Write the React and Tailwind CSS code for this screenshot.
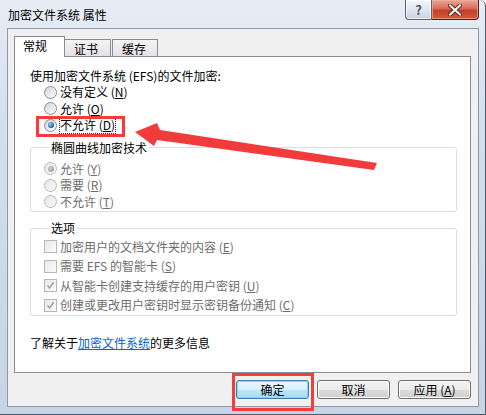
import React from "react";

const font = "font-['Noto_Sans_CJK_SC','Liberation_Sans',sans-serif]";

function Radio({ checked, disabled, focus, children }) {
  return (
    <div className="flex h-[16.5px] items-center">
      <span
        className={`flex h-[13px] w-[13px] items-center justify-center rounded-full border ${
          disabled
            ? "border-[#b8b8b8] bg-[linear-gradient(135deg,#e6e6e6,#fafafa)]"
            : "border-[#8a8c8f] bg-[linear-gradient(135deg,#d4d4d4,#ffffff)]"
        }`}
      >
        {checked && (
          <span
            className={`h-[6px] w-[6px] rounded-full ${
              disabled
                ? "bg-[radial-gradient(circle_at_35%_35%,#d0d0d0,#8c8c8c)]"
                : "bg-[radial-gradient(circle_at_35%_35%,#8fd0ff,#1a5fa8_70%)]"
            }`}
          />
        )}
      </span>
      <span
        className={`ml-[3px] leading-[16px] ${disabled ? "text-[#6d6d6d]" : "text-black"} ${
          focus ? "outline outline-1 outline-dotted outline-[#333]" : ""
        }`}
      >
        {children}
      </span>
    </div>
  );
}

function Check({ checked, children }) {
  return (
    <div className="flex h-[19.5px] items-center">
      <span className="flex h-[13px] w-[13px] items-center justify-center border border-[#b8b8b8] bg-[linear-gradient(135deg,#e8e8e8,#fbfbfb)]">
        {checked && (
          <svg width="9" height="9" viewBox="0 0 9 9">
            <path d="M1.5 4.5 L3.6 7 L7.6 1.2" fill="none" stroke="#a3a3a3" strokeWidth="1.6" />
          </svg>
        )}
      </span>
      <span className="ml-[3px] leading-[16px] text-[#6d6d6d]">{children}</span>
    </div>
  );
}

function Group({ title, className, children }) {
  return (
    <fieldset className={`w-[427px] rounded-[3px] border border-[#d5dfe5] pl-[13px] ${className}`}>
      <legend className="ml-[5px] px-[2px] leading-[16px] text-black">{title}</legend>
      {children}
    </fieldset>
  );
}

function Btn({ children, primary }) {
  return (
    <button
      className={`h-[19px] w-[73px] rounded-[3px] border leading-[16px] text-black ${
        primary
          ? "border-[#3c7fb1] bg-[linear-gradient(180deg,#eaf6fd_0%,#d9f0fc_50%,#bee6fd_51%,#a7d9f5_100%)] shadow-[inset_0_0_0_1px_#8ed3f3]"
          : "border-[#707070] bg-[linear-gradient(180deg,#f2f2f2_0%,#ebebeb_50%,#dddddd_51%,#cfcfcf_100%)] shadow-[inset_0_0_0_1px_#fcfcfc]"
      }`}
    >
      {children}
    </button>
  );
}

const U = ({ c }) => (
  <>
    {" "}(<span className="underline">{c}</span>)
  </>
);

export default function App() {
  return (
    <div
      className={`relative flex h-[415px] w-[486px] flex-col overflow-hidden rounded-tr-[6px] border-r border-b border-[#505a66] bg-[linear-gradient(180deg,#e6edf5_0%,#d3dfec_30%,#c6d4e5_100%)] text-[12px] ${font}`}
    >
      {/* title bar */}
      <div className="flex h-[28px] items-start justify-between pl-[8px] pr-[6px]">
        <span className="mt-[7px] leading-[16px] text-black">加密文件系统 属性</span>
        <div className="flex">
          <div className="flex h-[20px] w-[27px] items-center justify-center rounded-bl-[4px] border border-t-0 border-[#5d6670] bg-[linear-gradient(180deg,#f4f7fb_0%,#dfe6ef_50%,#cbd4df_100%)] shadow-[inset_0_0_0_1px_#ffffffaa]">
            <span className="text-[13px] font-bold leading-[14px] text-[#4a5360] [text-shadow:0_0_1px_#fff]">?</span>
          </div>
          <div className="flex h-[20px] w-[47px] items-center justify-center rounded-br-[4px] border border-t-0 border-l-0 border-[#5a1e14] bg-[linear-gradient(180deg,#e9a898_0%,#d96b55_45%,#c63f27_55%,#d35a41_100%)] shadow-[inset_0_0_0_1px_#f0b1a0aa]">
            <svg width="14" height="12" viewBox="0 0 14 12">
              <path d="M2 1.5 L12 10.5 M12 1.5 L2 10.5" stroke="#5a2a20" strokeWidth="4" strokeLinecap="square" />
              <path d="M2 1.5 L12 10.5 M12 1.5 L2 10.5" stroke="#ffffff" strokeWidth="2" strokeLinecap="square" />
            </svg>
          </div>
        </div>
      </div>

      {/* dialog body */}
      <div className="ml-[7px] flex h-[379px] w-[472px] flex-col border border-[#8d99a6] bg-[#f0f0f0] pl-[6px] pt-[7px]">
        {/* tabs */}
        <div className="flex h-[20px] items-end">
          <div className="relative z-10 mb-[-1px] flex h-[21px] w-[51px] items-start border border-b-0 border-[#898c95] bg-white pl-[8px] pt-[1px]">
            <span className="leading-[16px] text-black">常规</span>
          </div>
          <div className="flex h-[17px] w-[46px] items-start border border-b-0 border-l-0 border-[#898c95] bg-[linear-gradient(180deg,#f4f4f4,#e3e3e3)] pl-[9px] pt-[1px]">
            <span className="leading-[15px] text-black">证书</span>
          </div>
          <div className="ml-[1px] flex h-[17px] w-[46px] items-start border border-b-0 border-[#898c95] bg-[linear-gradient(180deg,#f4f4f4,#e3e3e3)] pl-[9px] pt-[1px]">
            <span className="leading-[15px] text-black">缓存</span>
          </div>
        </div>

        {/* panel */}
        <div className="flex h-[317px] w-[457px] flex-col border border-[#898c95] bg-white pl-[15px] pt-[11px]">
          <div className="leading-[16px] text-black">使用加密文件系统 (EFS)的文件加密:</div>
          <div className="ml-[14px]">
            <Radio>
              没有定义<U c="N" />
            </Radio>
            <Radio>
              允许<U c="O" />
            </Radio>
            <Radio checked focus>
              不允许<U c="D" />
            </Radio>
          </div>

          <Group title="椭圆曲线加密技术" className="mt-[6px] pb-[1px]">
            <div className="pt-[5px]">
              <Radio checked disabled>
                允许<U c="Y" />
              </Radio>
              <Radio disabled>
                需要<U c="R" />
              </Radio>
              <Radio disabled>
                不允许<U c="T" />
              </Radio>
            </div>
          </Group>

          <Group title="选项" className="mt-[8px]">
            <div className="pt-[1px]">
              <Check>
                加密用户的文档文件夹的内容<U c="E" />
              </Check>
              <Check>
                需要 EFS 的智能卡<U c="S" />
              </Check>
              <Check checked>
                从智能卡创建支持缓存的用户密钥<U c="U" />
              </Check>
              <Check checked>
                创建或更改用户密钥时显示密钥备份通知<U c="C" />
              </Check>
            </div>
          </Group>

          <div className="mt-[19px] leading-[16px] text-black">
            了解关于<span className="text-[#0066cc] underline">加密文件系统</span>的更多信息
          </div>
        </div>

        {/* buttons */}
        <div className="mt-[7px] flex w-[457px] justify-end gap-[8px]">
          <Btn primary>确定</Btn>
          <Btn>取消</Btn>
          <Btn>
            应用<U c="A" />
          </Btn>
        </div>
      </div>

      {/* annotations */}
      <div className="pointer-events-none absolute left-[36px] top-[116px] h-[21px] w-[89px] border-[3px] border-[#f43c3c]" />
      <div className="pointer-events-none absolute left-[232px] top-[373px] h-[38px] w-[82px] border-[3px] border-[#f43c3c]" />
      <svg className="pointer-events-none absolute left-0 top-0" width="486" height="415" viewBox="0 0 486 415">
        <polygon
          points="135,132 157,123 160,130 377,163 374,170 157,140 154,146"
          fill="#f23c3c"
        />
      </svg>
    </div>
  );
}
